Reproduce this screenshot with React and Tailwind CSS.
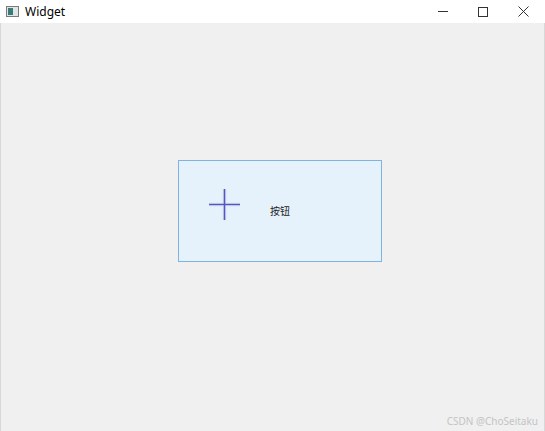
export default function App() {
  return (
    <div className="w-[545px] h-[431px] flex flex-col bg-[#f0f0f0] overflow-hidden" style={{ fontFamily: '"Microsoft YaHei", "Noto Sans CJK SC", sans-serif' }}>
      <div className="h-[23px] bg-white flex items-center shrink-0 relative">
        <div className="ml-[6px] w-[13px] h-[11px] border border-[#7a7a7a] bg-[#dfe6e6] flex items-center pl-[1px]">
          <div className="w-[5px] h-[7px] bg-[#3c7a7a]"></div>
        </div>
        <span className="ml-[6px] text-[12px] text-black leading-none" style={{ fontFamily: '"Noto Sans", "Noto Sans CJK SC", sans-serif' }}>Widget</span>
        <div className="ml-auto flex items-center h-full">
          <div className="w-[40px] h-full flex items-center justify-center">
            <div className="w-[10px] h-px bg-[#333]"></div>
          </div>
          <div className="w-[40px] h-full flex items-center justify-center">
            <div className="w-[10px] h-[10px] border border-[#333]"></div>
          </div>
          <div className="w-[40px] h-full flex items-center justify-center mr-[2px]">
            <svg width="11" height="11" viewBox="0 0 11 11">
              <path d="M0.5 0.5 L10.5 10.5 M10.5 0.5 L0.5 10.5" stroke="#333" strokeWidth="1" />
            </svg>
          </div>
        </div>
      </div>
      <div className="flex-1 relative border-l border-r border-l-[#d8d8d8] border-r-[#d8d8d8] flex flex-col">
        <div className="mt-[137px] ml-[177px] w-[204px] h-[102px] border border-[#7fb4e2] bg-[#e5f1fb] flex items-center">
          <svg className="ml-[29px] mt-[-14px]" width="33" height="33" viewBox="0 0 33 33">
            <path d="M16.5 1 V32 M1 16.5 H32" stroke="#e0e8f0" strokeWidth="4" />
            <path d="M16.5 1 V32 M1 16.5 H32" stroke="#5555c8" strokeWidth="1.6" />
          </svg>
          <span className="ml-[29px] text-[10px] text-[#222] leading-none">按钮</span>
        </div>
        <span className="absolute right-[6px] bottom-[5px] text-[10px] text-[#c4c4c4] leading-none" style={{ fontFamily: '"Noto Sans", sans-serif' }}>CSDN @ChoSeitaku</span>
      </div>
    </div>
  );
}
